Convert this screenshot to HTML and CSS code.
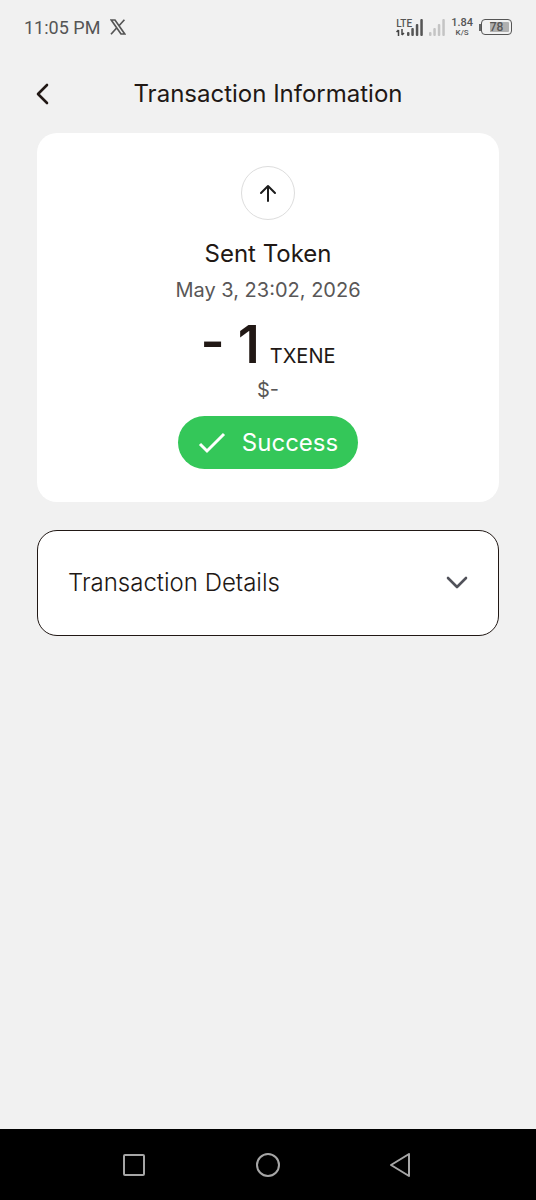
FILE: index.html
```html
<!DOCTYPE html>
<html lang="en">
<head>
<meta charset="utf-8">
<meta name="viewport" content="width=device-width, initial-scale=1">
<title>Transaction Information</title>
<link rel="stylesheet" href="styles.css">
</head>
<body>
<div class="screen">
  <div class="status-bar">
    <div class="status-left">
      <span class="clock">11:05 PM</span>
      <svg class="icon" width="16" height="16" viewBox="0 0 16 16" fill="none" stroke="#555" stroke-width="1.700"><path d="M1.200 1h3.800l9.800 14H11zM14.400.8 9 6.800M1 15.200l5.600-6.200"/></svg>
    </div>
    <div class="status-right">
      <div class="network">
        <div class="lte">
          <span class="lte-label">LTE</span>
          <svg class="icon" width="9" height="7" viewBox="0 0 9 7" fill="none" stroke="#444" stroke-width="1.500"><path d="M2.500 7V1M.5 3l2-2M6 0v6M8 4 6 6"/></svg>
        </div>
        <svg class="icon" width="16" height="17" viewBox="0 0 16 17" fill="#555"><rect y="13" width="2.500" height="4" rx="1"/><rect x="4.300" y="9" width="2.500" height="8" rx="1"/><rect x="8.800" y="5" width="2.500" height="12" rx="1"/><rect x="13.300" width="2.500" height="17" rx="1"/></svg>
      </div>
      <svg class="icon" width="16" height="17" viewBox="0 0 16 17" fill="#c4c4c4"><rect y="13" width="2.500" height="4" rx="1"/><rect x="4.300" y="9" width="2.500" height="8" rx="1"/><rect x="8.800" y="5" width="2.500" height="12" rx="1"/><rect x="13.300" width="2.500" height="17" rx="1"/></svg>
      <div class="speed"><span class="speed-value">1.84</span><span class="speed-unit">K/S</span></div>
      <div class="battery"><span class="battery-body">78</span></div>
    </div>
  </div>

  <header class="header">
    <button class="back" type="button" aria-label="Back">
      <svg class="icon" width="13" height="22" viewBox="0 0 13 22" fill="none" stroke="#211815" stroke-width="2.600" stroke-linecap="round" stroke-linejoin="round"><path d="M11 2 2 11l9 9"/></svg>
    </button>
    <h1 class="title">Transaction Information</h1>
  </header>

  <main class="content">
    <section class="card summary">
      <div class="direction">
        <svg class="icon" width="18" height="18" viewBox="0 0 18 18" fill="none" stroke="#1c1c1c" stroke-width="2" stroke-linecap="round" stroke-linejoin="round"><path d="M9 17V2M2 9l7-7 7 7"/></svg>
      </div>
      <h2 class="kind">Sent Token</h2>
      <p class="date">May 3, 23:02, 2026</p>
      <p class="amount"><span class="number">- 1</span><span class="unit">TXENE</span></p>
      <p class="fiat">$-</p>
      <div class="status">
        <svg class="icon" width="28" height="22" viewBox="0 0 28 22" fill="none" stroke="#fff" stroke-width="3" stroke-linejoin="miter"><path d="m2 12 7 7L26 2"/></svg>
        <span>Success</span>
      </div>
    </section>

    <button class="card details" type="button" aria-expanded="false">
      <span>Transaction Details</span>
      <svg class="icon" width="22" height="14" viewBox="0 0 22 14" fill="none" stroke="#51525a" stroke-width="2.600" stroke-linecap="round" stroke-linejoin="round"><path d="m2 2 9 9 9-9"/></svg>
    </button>
  </main>

  <nav class="system-nav">
    <button class="nav-button" type="button" aria-label="Recent apps"><svg class="icon" width="24" height="24" viewBox="0 0 24 24" fill="none" stroke="#a6a6a6" stroke-width="2"><rect x="2" y="2" width="20" height="20" rx="1"/></svg></button>
    <button class="nav-button" type="button" aria-label="Home"><svg class="icon" width="24" height="24" viewBox="0 0 24 24" fill="none" stroke="#a6a6a6" stroke-width="2"><circle cx="12" cy="12" r="11"/></svg></button>
    <button class="nav-button" type="button" aria-label="Back to previous screen"><svg class="icon" width="24" height="24" viewBox="0 0 24 24" fill="none" stroke="#a6a6a6" stroke-width="2" stroke-linejoin="round"><path d="M19 1v22L1 12z"/></svg></button>
  </nav>
</div>
</body>
</html>
```
FILE: styles.css
```css
* { box-sizing: border-box; }

body {
  margin: 0;
  background: #f1f1f1;
  color: #211815;
  font-family: Inter, "Liberation Sans", sans-serif;
}

h1, h2, p { margin: 0; font-weight: 400; }

button {
  margin: 0;
  padding: 0;
  border: 0;
  background: none;
  color: inherit;
  font: inherit;
  cursor: pointer;
}

.icon { display: block; flex: none; }

.screen {
  display: flex;
  flex-direction: column;
  min-height: 100vh;
}

.status-bar {
  display: flex;
  justify-content: space-between;
  align-items: center;
  height: 54px;
  padding: 0 24px;
  color: #555;
  font-family: Roboto, sans-serif;
}

.status-left { display: flex; align-items: center; gap: 10px; }
.clock { font-size: 18px; }

.status-right { display: flex; align-items: center; gap: 6px; }
.network { display: flex; align-items: flex-end; }
.lte { display: flex; flex-direction: column; width: 11px; }
.lte-label { font-size: 10px; line-height: 10px; font-weight: 500; }

.speed {
  display: flex;
  flex-direction: column;
  align-items: center;
  font-weight: 500;
}
.speed-value { font-size: 11px; line-height: 11px; }
.speed-unit { font-size: 8px; line-height: 9px; }

.battery { display: flex; align-items: center; }
.battery::before {
  content: "";
  width: 2px;
  height: 7px;
  background: #666;
}
.battery-body {
  width: 31px;
  height: 16px;
  border: 1px solid #555;
  border-radius: 4px;
  background: linear-gradient(90deg, transparent 6px, #b0b0b0 6px) content-box;
  padding: 2px;
  font-size: 12px;
  line-height: 10px;
  font-weight: 500;
  text-align: center;
}

.header {
  display: grid;
  grid-template-columns: 48px 1fr 48px;
  align-items: center;
  height: 79px;
  padding: 0 18px;
}
.back { display: grid; place-items: center; height: 48px; }
.title { font-size: 24px; line-height: 32px; text-align: center; }

.content {
  display: flex;
  flex: 1;
  flex-direction: column;
  gap: 28px;
  padding: 0 37px 28px;
}

.card { border-radius: 20px; background: #fff; }

.summary {
  display: flex;
  flex-direction: column;
  align-items: center;
  padding: 33px 24px;
}

.direction {
  display: grid;
  place-items: center;
  width: 54px;
  height: 54px;
  border: 1px solid #ddd;
  border-radius: 50%;
}
.kind { margin-top: 18px; font-size: 24px; line-height: 32px; }
.date { margin-top: 4px; color: #595757; font-size: 20px; line-height: 32px; }

.amount { display: flex; align-items: baseline; gap: 10px; padding-top: 3px; }
.number { font-size: 52px; line-height: 72px; font-weight: 600; }
.unit { font-size: 20px; }
.fiat { color: #595757; font-size: 20px; line-height: 19px; }

.status {
  display: flex;
  align-items: center;
  gap: 16px;
  height: 53px;
  margin-top: 16px;
  padding: 0 20px;
  border-radius: 27px;
  background: #34c759;
  color: #fff;
  font-size: 24px;
}

.details {
  display: flex;
  align-items: center;
  justify-content: space-between;
  min-height: 106px;
  padding: 0 30px;
  border: 1px solid #211815;
  font-size: 24px;
  line-height: 32px;
  font-weight: 300;
  text-align: left;
}

.system-nav {
  display: flex;
  justify-content: space-around;
  align-items: center;
  height: 71px;
  padding: 0 67px;
  background: #000;
}
.nav-button { display: grid; place-items: center; width: 48px; height: 48px; }
```
